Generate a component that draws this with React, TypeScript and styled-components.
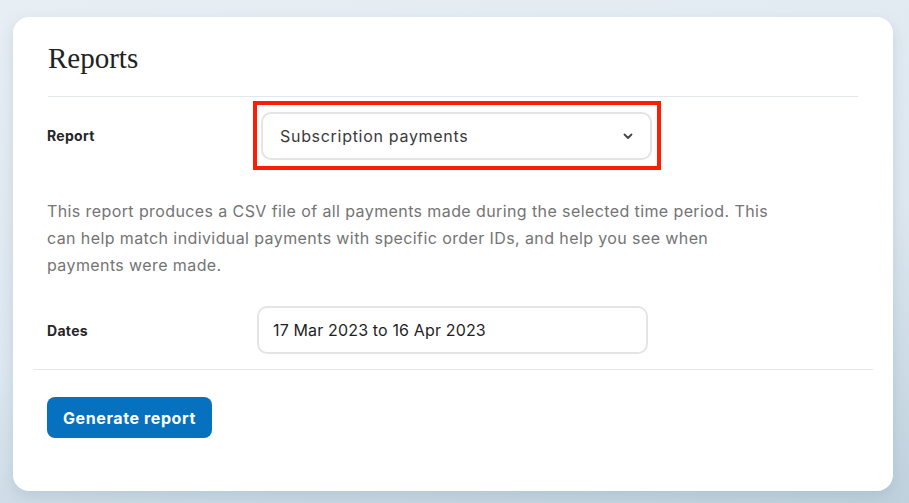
import styled, { createGlobalStyle } from "styled-components";

const GlobalStyle = createGlobalStyle`
  html, body {
    margin: 0;
    padding: 0;
  }
  body {
    width: 909px;
    height: 503px;
    overflow: hidden;
    font-family: "Inter", "Noto Sans", sans-serif;
    background: linear-gradient(170deg, #e7eef4 0%, #dde7ef 55%, #bfd1dd 100%);
  }
`

const Page = styled.div`
  padding: 17px 16px 12px 13px;
  box-sizing: border-box;
  height: 503px;
`

const Card = styled.div`
  width: 880px;
  height: 474px;
  box-sizing: border-box;
  background: #ffffff;
  border-radius: 16px;
  padding: 0 20px;
  box-shadow: 0 6px 14px rgba(120, 150, 170, 0.25);
`

const Header = styled.div`
  margin: 0 15px;
  padding: 25px 0 22px;
  border-bottom: 1px solid #e3e8ec;
`

const Title = styled.h1`
  margin: 0;
  font-family: "Liberation Serif", "DejaVu Serif", serif;
  font-weight: 400;
  font-size: 29px;
  line-height: 32px;
  color: #222;
`

const Body = styled.div`
  padding: 4px 14px 15px;
  border-bottom: 1px solid #e8e8e8;
`

const Row = styled.div`
  display: flex;
  align-items: center;
`

const Label = styled.div`
  width: 206px;
  flex-shrink: 0;
  font-size: 14px;
  font-weight: 700;
  letter-spacing: 0.3px;
  color: #262626;
`

const Highlight = styled.div`
  border: 4px solid #fc1d05;
  padding: 7px 5px 6px 4px;
`

const Field = styled.div<{ $pad?: number; $spacing?: number }>`
  width: 391px;
  height: 48px;
  box-sizing: border-box;
  border: 2px solid #e4e4e4;
  border-radius: 10px;
  display: flex;
  align-items: center;
  justify-content: space-between;
  padding: 0 16px 0 ${(p) => p.$pad ?? 17}px;
  font-size: 16px;
  letter-spacing: ${(p) => p.$spacing ?? 0}px;
  color: ${(p) => (p.$pad ? "#1f1f1f" : "#3a3a3a")};
`

const Description = styled.p`
  margin: 28px 0 0;
  max-width: 735px;
  font-size: 16px;
  line-height: 27px;
  color: #747474;
  letter-spacing: 0.4px;
`

const DatesRow = styled(Row)`
  margin-top: 27px;
`

const DatesInner = styled.div`
  padding-left: 4px;
`

const Footer = styled.div`
  padding: 27px 14px;
`

const Button = styled.button`
  height: 41px;
  padding: 0 16px;
  border: none;
  border-radius: 8px;
  background: #0671bf;
  color: #fff;
  font-family: "Inter", "Noto Sans", sans-serif;
  font-size: 16px;
  font-weight: 700;
  letter-spacing: 0.6px;
`

const Chevron = () => (
  <svg width="12" height="12" viewBox="0 0 12 12" fill="none">
    <path d="M2.5 4.5 L6 8 L9.5 4.5" stroke="#444" strokeWidth="1.8" strokeLinecap="round" strokeLinejoin="round" />
  </svg>
)

const App = () => {
  return (
    <>
      <GlobalStyle />
      <Page>
        <Card>
          <Header>
            <Title>Reports</Title>
          </Header>
          <Body>
            <Row>
              <Label>Report</Label>
              <Highlight>
                <Field $spacing={0.7}>
                  Subscription payments
                  <Chevron />
                </Field>
              </Highlight>
            </Row>
            <Description>
              This report produces a CSV file of all payments made during the selected time period. This
              can help match individual payments with specific order IDs, and help you see when
              payments were made.
            </Description>
            <DatesRow>
              <Label>Dates</Label>
              <DatesInner>
                <Field $pad={14} $spacing={0.15}>17 Mar 2023 to 16 Apr 2023</Field>
              </DatesInner>
            </DatesRow>
          </Body>
          <Footer>
            <Button>Generate report</Button>
          </Footer>
        </Card>
      </Page>
    </>
  );
};

export default App
